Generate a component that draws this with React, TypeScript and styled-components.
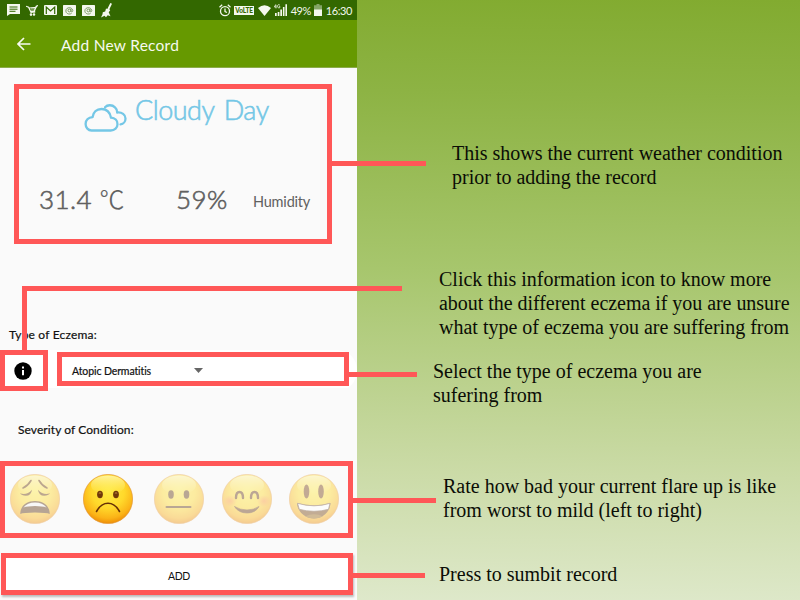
import React from "react";
import styled, { createGlobalStyle } from "styled-components";

const RED = "#ff5757";

const GlobalStyle = createGlobalStyle`
  *, *::before, *::after { box-sizing: border-box; }
  body { margin: 0; overflow: hidden; }
  svg { display: block; flex: none; }
`;

const Page = styled.main`
  width: 800px;
  height: 600px;
  display: grid;
  grid-template-columns: 357px 1fr;
  overflow: hidden;
  background: linear-gradient(181deg, #82ab30 0%, #8db344 16%, #a7c66d 45%, #bed392 66%, #cbdba7 78%, #dfe9cc 100%);
`;

const Phone = styled.section`
  display: flex;
  flex-direction: column;
  height: 600px;
  background: #fafafa;
  font-family: Lato, "Noto Sans CJK JP", sans-serif;
  font-variant-ligatures: none;
`;

const StatusBar = styled.div`
  height: 20px;
  padding: 0 5px 0 7px;
  display: flex;
  align-items: center;
  justify-content: space-between;
  background: #336800;
  color: #f4f8ee;
`;

const StatusGroup = styled.div<{ $gap: number }>`
  display: flex;
  align-items: center;
  gap: ${(p) => p.$gap}px;
`;

const StatusText = styled.span<{ $spacing: number }>`
  padding-top: 1px;
  font-size: 11px;
  line-height: 20px;
  letter-spacing: ${(p) => p.$spacing}px;
  white-space: nowrap;
`;

const VolteBadge = styled.span`
  width: 20px;
  height: 9px;
  background: #f4f8ee;
  color: #336800;
  font-size: 6.5px;
  font-weight: 900;
  line-height: 9px;
  letter-spacing: -0.1px;
  text-align: center;
`;

const AppBar = styled.header`
  height: 48px;
  padding: 1px 0 0 17px;
  display: flex;
  align-items: center;
  gap: 30px;
  background: #669900;
  border-bottom: 1px solid #8bab4b;
  color: #f6faef;
`;

const AppTitle = styled.h1`
  margin: 0;
  padding-top: 1px;
  font-size: 15.5px;
  font-weight: 400;
  letter-spacing: 0.25px;
  line-height: 24px;
`;

const Frame = styled.div<{ $line: number; $at: number }>`
  position: relative;
  border: 5px solid ${RED};

  &::after {
    content: "";
    position: absolute;
    left: 100%;
    top: ${(p) => p.$at}px;
    margin-left: 5px;
    width: ${(p) => p.$line}px;
    height: 5px;
    background: ${RED};
  }
`;

const WeatherFrame = styled(Frame)`
  width: 318px;
  height: 160px;
  margin: 16px 0 0 14px;
  display: flex;
  flex-direction: column;
  justify-content: space-between;
`;

const Condition = styled.div`
  display: flex;
  gap: 8px;
  padding: 5px 0 0 65px;
  color: #74c7e6;
`;

const Clouds = styled.span`
  padding-top: 10px;
`;

const ConditionName = styled.span`
  font-size: 27px;
  font-weight: 300;
  line-height: 32px;
  letter-spacing: -0.5px;
  word-spacing: 3px;
  -webkit-text-stroke: 0.6px currentColor;
  white-space: nowrap;
`;

const Readings = styled.div`
  display: grid;
  grid-template-columns: 137px 77px 1fr;
  height: 32px;
  margin-bottom: 24px;
  padding-left: 20px;
  color: #606060;
`;

const Reading = styled.span<{ $spacing: number }>`
  font-size: 26px;
  font-weight: 300;
  line-height: 32px;
  letter-spacing: ${(p) => p.$spacing}px;
  -webkit-text-stroke: 0.6px currentColor;
  white-space: nowrap;
`;

const DegreeUnit = styled.span`
  font-family: "Noto Sans CJK JP", sans-serif;
  font-weight: 300;
  font-size: 25px;
  line-height: 1;
  -webkit-text-stroke: 0.2px currentColor;
`;

const ReadingLabel = styled.span`
  padding-top: 3px;
  font-size: 14.5px;
  line-height: 32px;
  letter-spacing: -0.2px;
  white-space: nowrap;
`;

const FieldLabel = styled.div<{ $left: number; $top: number; $spacing: number }>`
  margin: ${(p) => p.$top}px 0 0 ${(p) => p.$left}px;
  height: 20px;
  font-size: 12px;
  line-height: 20px;
  letter-spacing: ${(p) => p.$spacing}px;
  color: #111;
  -webkit-text-stroke: 0.2px #111;
  white-space: nowrap;
`;

const EczemaRow = styled.div`
  display: flex;
  align-items: flex-start;
  gap: 9px;
  height: 41px;
  margin-top: 5px;
  background: linear-gradient(#fff 0 38px, transparent 38px);
  border-radius: 0 20px 20px 0;
`;

const InfoFrame = styled.div`
  position: relative;
  width: 48px;
  height: 41px;
  padding-left: 9px;
  display: flex;
  align-items: center;
  border: 5px solid ${RED};

  &::before {
    content: "";
    position: absolute;
    left: 17px;
    bottom: 100%;
    margin-bottom: 5px;
    width: 380px;
    height: 64px;
    border: solid ${RED};
    border-width: 5px 0 0 5px;
  }
`;

const SelectFrame = styled(Frame)`
  width: 292px;
  height: 34px;
  margin-top: 2px;
  padding: 3px 0 0 10px;
  display: flex;
  align-items: center;
  background: #fff;
`;

const SelectValue = styled.span`
  width: 122px;
  font-size: 10.5px;
  line-height: 16px;
  letter-spacing: -0.1px;
  color: #111;
  -webkit-text-stroke: 0.2px #111;
  white-space: nowrap;
`;

const RatingFrame = styled(Frame)`
  width: 353px;
  height: 77px;
  margin-top: 21px;
  padding-left: 5px;
  display: grid;
  grid-template-columns: 73px 71px 68px 67px 50px;
  align-items: center;
`;

const FaceButton = styled.span<{ $active?: boolean }>`
  width: 50px;
  height: 50px;
  margin-top: -1px;
  opacity: ${(p) => (p.$active ? 1 : 0.43)};
`;

const AddFrame = styled(Frame)`
  width: 352px;
  height: 42px;
  margin: 15px 0 0 1px;
  padding: 4px 0 0 4px;
  display: flex;
  align-items: center;
  justify-content: center;
  background: #fff;
  box-shadow: 1px 2px 2px rgba(0, 0, 0, 0.25);
  font-size: 10.5px;
  letter-spacing: -0.4px;
  color: #111;
`;

const Notes = styled.section`
  display: flex;
  flex-direction: column;
  padding-top: 141px;
  color: #0b0d06;
  font: 20px/24px "Liberation Serif", serif;
`;

const Note = styled.p<{ $left: number; $gap: number }>`
  margin: 0 0 ${(p) => p.$gap}px ${(p) => p.$left}px;
  white-space: nowrap;
`;

const NoteLine = styled.span<{ $spacing?: number }>`
  display: block;
  letter-spacing: ${(p) => p.$spacing ?? 0}px;
`;

const MessageIcon = () => (
  <svg width="13" height="12" viewBox="0 0 13 12">
    <path d="M0 0h13v10H3L0 12z" fill="#f4f8ee" />
    <path d="M2.5 3h8M2.5 5.2h8M2.5 7.3h6" stroke="#336800" strokeWidth="1" />
  </svg>
);

const CartIcon = () => (
  <svg width="12" height="11" viewBox="0 0 12 11" fill="none" stroke="#f4f8ee" strokeWidth="1.2">
    <path d="M0 1.2 2.6 2.3l2.4 5 4.3-.4M3 3l7-.5-2 3.5-3.7.4M12 .5l-1.7.8-2.6 6.5" />
    <path d="M6 2.5v3.3M8 2.5v3" strokeWidth=".7" />
    <circle cx="5" cy="9.6" r=".7" />
    <circle cx="8" cy="9.5" r=".7" />
  </svg>
);

const MailIcon = () => (
  <svg width="13" height="10" viewBox="0 0 13 10">
    <rect width="13" height="10" rx="1" fill="#f4f8ee" />
    <path d="M2.3 9V2.1L6.5 6l4.2-3.9V9" fill="none" stroke="#336800" strokeWidth="1.2" />
  </svg>
);

const AtIcon = () => (
  <svg width="13" height="11" viewBox="0 0 13 11">
    <rect width="13" height="11" rx=".6" fill="#f4f8ee" />
    <path d="M8.6 8.3A3.5 3.2 0 1 1 9.8 5.5c0 1.8-1.8 1.7-1.8.4V4" fill="none" stroke="#66884a" strokeWidth=".8" />
    <circle cx="6.4" cy="5.5" r="1.4" fill="none" stroke="#66884a" strokeWidth=".8" />
  </svg>
);

const GuitarIcon = () => (
  <svg width="12" height="15" viewBox="0 0 12 15">
    <path d="M9.3 0 11 .8 8.4 6.3l.8 1-1.5 2 1.8 4-2.8-1-1.7 2-1.5-1.5L0 14.5l1.5-3.3.3-2 2.4-.8L5 5.5l1.3.6z" fill="#f4f8ee" />
  </svg>
);

const AlarmIcon = () => (
  <svg width="12" height="13" viewBox="0 0 12 13" fill="none" stroke="#f4f8ee" strokeWidth="1.3">
    <circle cx="6" cy="7.2" r="4.5" />
    <path d="M6 4.5v3l2 1M.5 3.2 3.2.8M11.5 3.2 8.8.8" />
  </svg>
);

const WifiIcon = () => (
  <svg width="13" height="11" viewBox="0 0 13 11">
    <path d="M0 3Q6.5-2.7 13 3L6.5 11z" fill="#f4f8ee" />
  </svg>
);

const SignalIcon = () => (
  <svg width="13" height="12" viewBox="0 0 13 12">
    <path d="M1 9h1.7v3H1zM3.7 8h1.7v4H3.7zM6.3 5.5H8V12H6.3zM8.9 3h1.6v9H8.9zM11.4.3H13V12h-1.6z" fill="#f4f8ee" />
    <path d="M1.8.4.4 3h2M2 1v3.4M5.8 1C4.2 0 3.5 1.2 3.5 2.3S4.6 4.4 5.8 3.7V2.4H4.9" fill="none" stroke="#f4f8ee" strokeWidth=".8" />
  </svg>
);

const BatteryIcon = () => (
  <svg width="8" height="12" viewBox="0 0 8 12">
    <path d="M2.5 0h3v1.2H8V6H0V1.2h2.5z" fill="#85a567" />
    <path d="M0 5.5h8V12H0z" fill="#f4f8ee" />
  </svg>
);

const BackIcon = () => (
  <svg width="14" height="14" viewBox="0 0 14 14" fill="none" stroke="#f6faef" strokeWidth="1.7">
    <path d="M13.5 7H1.2M7 1 1 7l6 6" />
  </svg>
);

const CloudsIcon = () => (
  <svg width="43" height="28" viewBox="0 0 43 28" fill="none" stroke="currentColor" strokeWidth="2.3" strokeLinecap="round" strokeLinejoin="round">
    <path d="M7.5 26.5h19.2c4 0 6.8-2.8 6.8-6.3 0-3.7-2.5-6.3-6.5-6.5C26 8.5 22.7 5 17.5 5c-4.7 0-8.3 3.2-8.9 8.1C4.5 13.4 1.6 16 1.6 20c0 3.7 2.7 6.5 5.9 6.5Z" />
    <path d="M21 3.2C23.3.8 28 .4 31 3.3c1.7 1.5 2.3 3.2 2.2 5.2 4.7-.5 8.3 2.2 8.3 5.9 0 3-2 5.600-5 6" />
  </svg>
);

const InfoIcon = () => (
  <svg width="18" height="18" viewBox="0 0 18 18">
    <circle cx="9" cy="9" r="8.7" fill="#000" />
    <path d="M8 4.4h2v2H8zM8 8h2v5.3H8z" fill="#fff" />
  </svg>
);

const ArrowIcon = () => (
  <svg width="9" height="5" viewBox="0 0 9 5">
    <path d="M0 0h9L4.5 5z" fill="#666" />
  </svg>
);

type Mood = "weary" | "sad" | "neutral" | "blush" | "happy";

const features: Record<Mood, React.ReactNode> = {
  weary: (
    <>
      <path d="M13 14q5-2.3 8-7.5M37 14q-5-2.3-8-7.5" fill="none" stroke="#6b3a05" strokeWidth="1.6" strokeLinecap="round" />
      <path d="M10 19.3q6.5 2.5 12-3.6-.8 6-6.2 6-4.2 0-5.8-2.4ZM40 19.3q-6.5 2.5-12-3.6.8 6 6.2 6 4.2 0 5.8-2.4Z" fill="#6b3a05" />
      <path d="M10.3 40C10.3 31.5 17 27 25 27s14.7 4.5 14.7 13q-3-1.5-14.7-1.5T10.3 40Z" fill="#5f3510" />
      <path d="M13.5 33.5Q17.5 28.5 25 28.5t11.5 5q-4-1.5-11.5-1.5t-11.5 1.5Z" fill="#f4f4f4" />
    </>
  ),
  sad: (
    <>
      <ellipse cx="17" cy="20.5" rx="2.9" ry="3.7" fill="#70390a" />
      <ellipse cx="33" cy="20.5" rx="2.9" ry="3.7" fill="#70390a" />
      <path d="M16 19.5q1-1.5 2 0M32 19.5q1-1.5 2 0" fill="none" stroke="#b57a3e" strokeWidth="1.1" />
      <path d="M13.5 37.5Q18 29.3 25 29.3t11.5 8.2" fill="none" stroke="#663006" strokeWidth="1.6" strokeLinecap="round" />
    </>
  ),
  neutral: (
    <>
      <ellipse cx="17" cy="20.5" rx="2.8" ry="4.2" fill="#663b10" />
      <ellipse cx="32.5" cy="20.5" rx="2.8" ry="4.2" fill="#663b10" />
      <path d="M12.5 33h24" stroke="#663b10" strokeWidth="2" strokeLinecap="round" />
    </>
  ),
  blush: (
    <>
      <ellipse cx="8" cy="27" rx="7" ry="6" fill="url(#cheek)" />
      <ellipse cx="42" cy="27" rx="7" ry="6" fill="url(#cheek)" />
      <path d="M14 24q0-6 3.5-6t3.5 6M29 24q0-6 3.5-6t3.5 6" fill="none" stroke="#6b3a12" strokeWidth="2.4" strokeLinecap="round" />
      <path d="M12.5 32.5Q18 36 25 36t12-3.5q-3.5 6.5-12 6.5t-12.5-6.5Z" fill="#6b3a12" stroke="#6b3a12" strokeWidth=".7" />
    </>
  ),
  happy: (
    <>
      <ellipse cx="17.5" cy="17.5" rx="2.8" ry="7" fill="#7a4310" />
      <ellipse cx="32" cy="17.5" rx="2.8" ry="7" fill="#7a4310" />
      <path d="M8 29q8.5 2.2 17 2.2T41.5 29C41 38 34 44.5 25 44.5S8.5 38 8 29Z" fill="#7b4811" />
      <path d="M8.5 29.3q8.5 2.5 16.5 2.5t16-2.5l-1.5 6q-7 2-14.5 2t-14.7-2Z" fill="#fff" stroke="#745033" strokeWidth=".8" />
      <path d="M16 42.5q9-4.5 18 0-9 4-18 0Z" fill="#9b6a18" />
    </>
  ),
};

const Face = ({ mood }: { mood: Mood }) => (
  <svg width="50" height="50" viewBox="0 0 50 50">
    <defs>
      <radialGradient id="skin" cx="50%" cy="35%" r="66%">
        <stop offset="0" stopColor="#ffeb42" />
        <stop offset=".5" stopColor="#ffd92b" />
        <stop offset=".82" stopColor="#fbb317" />
        <stop offset="1" stopColor="#ed8a05" />
      </radialGradient>
      <linearGradient id="gloss" x1="0" y1="0" x2="0" y2="1">
        <stop offset="0" stopColor="#fff9b8" stopOpacity=".8" />
        <stop offset="1" stopColor="#fff172" stopOpacity="0" />
      </linearGradient>
      <radialGradient id="cheek">
        <stop offset="0" stopColor="#ff7b36" stopOpacity=".65" />
        <stop offset="1" stopColor="#ff7b36" stopOpacity="0" />
      </radialGradient>
    </defs>
    <circle cx="25" cy="25" r="24.6" fill="url(#skin)" stroke="#e29633" strokeWidth=".7" />
    <ellipse cx="25" cy="11" rx="17" ry="9.5" fill="url(#gloss)" />
    {features[mood]}
  </svg>
);

const moods: Mood[] = ["weary", "sad", "neutral", "blush", "happy"];

export default function App() {
  return (
    <>
      <GlobalStyle />
      <Page>
        <Phone>
          <StatusBar>
            <StatusGroup $gap={6}>
              <MessageIcon />
              <CartIcon />
              <MailIcon />
              <AtIcon />
              <AtIcon />
              <GuitarIcon />
            </StatusGroup>
            <StatusGroup $gap={3.5}>
              <AlarmIcon />
              <VolteBadge>VoLTE</VolteBadge>
              <WifiIcon />
              <SignalIcon />
              <StatusText $spacing={-0.5}>49%</StatusText>
              <BatteryIcon />
              <StatusText $spacing={-0.4}>16:30</StatusText>
            </StatusGroup>
          </StatusBar>
          <AppBar>
            <BackIcon />
            <AppTitle>Add New Record</AppTitle>
          </AppBar>
          <WeatherFrame $line={94} $at={72}>
            <Condition>
              <Clouds>
                <CloudsIcon />
              </Clouds>
              <ConditionName>Cloudy Day</ConditionName>
            </Condition>
            <Readings>
              <Reading $spacing={0.4}>
                31.4 <DegreeUnit>℃</DegreeUnit>
              </Reading>
              <Reading $spacing={0.4}>59%</Reading>
              <ReadingLabel>Humidity</ReadingLabel>
            </Readings>
          </WeatherFrame>
          <FieldLabel $left={9} $top={81} $spacing={0.2}>Type of Eczema:</FieldLabel>
          <EczemaRow>
            <InfoFrame>
              <InfoIcon />
            </InfoFrame>
            <SelectFrame $line={68} $at={15}>
              <SelectValue>Atopic Dermatitis</SelectValue>
              <ArrowIcon />
            </SelectFrame>
          </EczemaRow>
          <FieldLabel $left={18} $top={29} $spacing={0.08}>Severity of Condition:</FieldLabel>
          <RatingFrame $line={83} $at={32}>
            {moods.map((mood) => (
              <FaceButton key={mood} $active={mood === "sad"}>
                <Face mood={mood} />
              </FaceButton>
            ))}
          </RatingFrame>
          <AddFrame $line={72} $at={15}>ADD</AddFrame>
        </Phone>
        <Notes>
          <Note $left={95} $gap={78}>
            <NoteLine>This shows the current weather condition</NoteLine>
            <NoteLine>prior to adding the record</NoteLine>
          </Note>
          <Note $left={82} $gap={20}>
            <NoteLine>Click this information icon to know more</NoteLine>
            <NoteLine $spacing={-0.04}>about the different eczema if you are unsure</NoteLine>
            <NoteLine>what type of eczema you are suffering from</NoteLine>
          </Note>
          <Note $left={76} $gap={67}>
            <NoteLine>Select the type of eczema you are</NoteLine>
            <NoteLine>sufering from</NoteLine>
          </Note>
          <Note $left={86} $gap={40}>
            <NoteLine>Rate how bad your current flare up is like</NoteLine>
            <NoteLine>from worst to mild (left to right)</NoteLine>
          </Note>
          <Note $left={82} $gap={0}>
            <NoteLine>Press to sumbit record</NoteLine>
          </Note>
        </Notes>
      </Page>
    </>
  );
}
